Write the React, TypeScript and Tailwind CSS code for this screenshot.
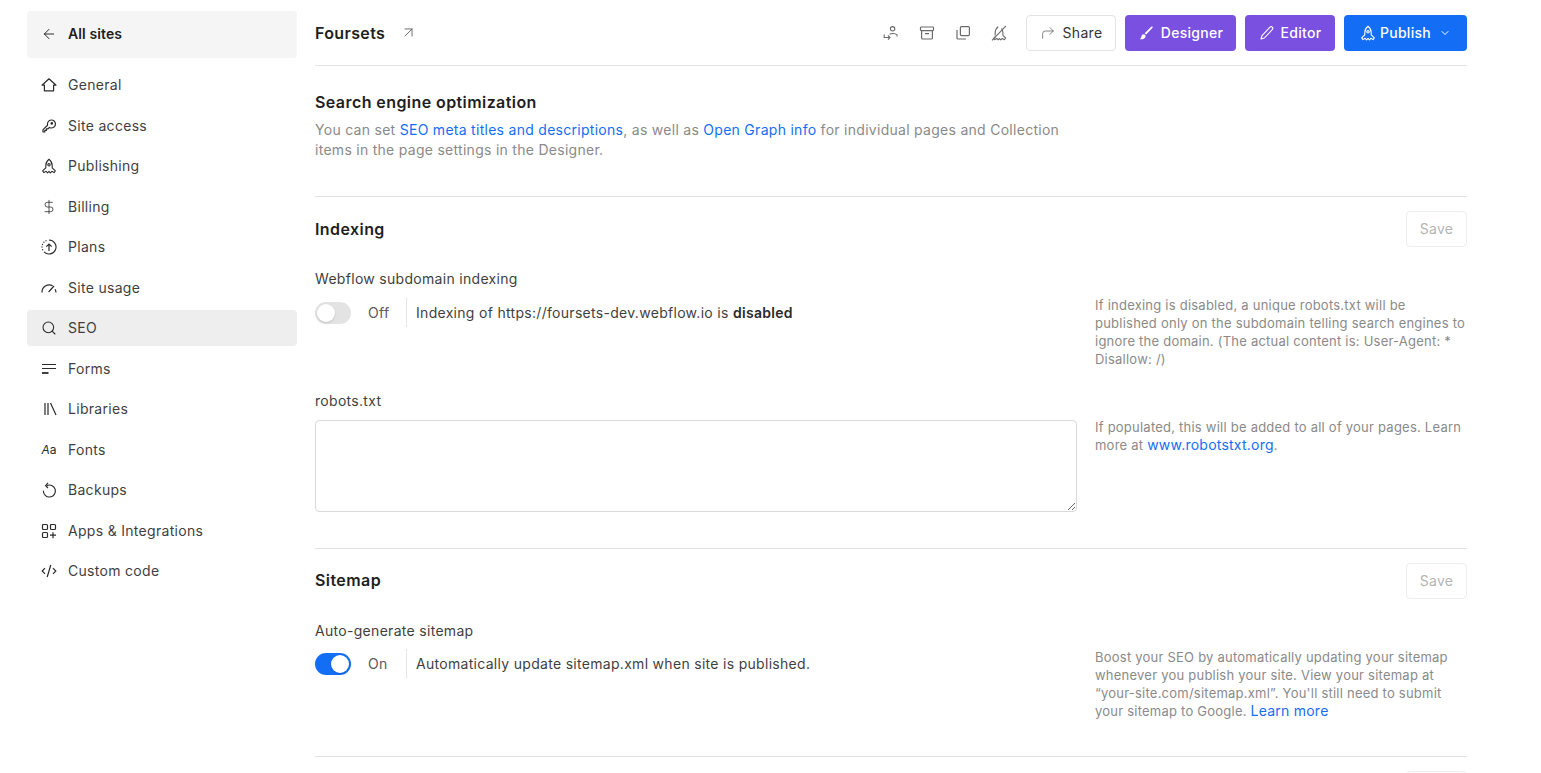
import { ArrowLeft, ArrowUpRight, ChevronDown, CornerUpRight, DollarSign, Search } from "lucide-react";
import type { ReactNode } from "react";

type IconProps = { className?: string };

function Rocket({ className = "" }: IconProps) {
  return (
    <svg viewBox="0 0 16 16" fill="none" stroke="currentColor" strokeWidth="1.1" strokeLinejoin="round" className={className}>
      <path d="M8 1.2C5.6 3 4.8 5.4 4.8 7.6v2.2L1.6 12.8l1.3 1.8 2.2-1.3L6.6 14.8 8 13.4l1.4 1.4 1.5-1.5 2.2 1.3 1.3-1.8-3.2-3V7.6C11.2 5.4 10.4 3 8 1.2Z" />
      <circle cx="8" cy="6.8" r="1.2" />
    </svg>
  );
}

function HomeIcon() {
  return (
    <svg viewBox="0 0 16 16" fill="none" stroke="currentColor" strokeWidth="1.2" strokeLinejoin="round" className="h-4 w-4">
      <path d="M8 1.8 1 8.2h2.4v5.6h9.2V8.2H15L8 1.8Z" />
    </svg>
  );
}

function KeyIcon() {
  return (
    <svg viewBox="0 0 16 16" fill="none" stroke="currentColor" strokeWidth="1.2" strokeLinejoin="round" className="h-4 w-4">
      <path d="M10.2 2a4 4 0 0 1 .5 8 4 4 0 0 1-2.2-.6L7 10.8H5.4v1.6H3.8V14H2v-2.4l4.6-4.4A4 4 0 0 1 10.2 2Z" />
      <circle cx="10.8" cy="5.4" r="0.7" />
    </svg>
  );
}

function PlansIcon() {
  return (
    <svg viewBox="0 0 16 16" fill="none" stroke="currentColor" strokeWidth="1.1" className="h-4 w-4">
      <path d="M8 1a7 7 0 1 1-5 11.9" />
      <path d="M1 8v.1M1.5 5.4v.1M2.9 3.2v.1M5 1.7v.1M1.6 10.7v.1" strokeLinecap="round" strokeWidth="1.3" />
      <path d="M8 12V5M5.3 7.6 8 5l2.7 2.6" strokeWidth="1.2" />
    </svg>
  );
}

function GaugeIcon() {
  return (
    <svg viewBox="0 0 16 16" fill="none" stroke="currentColor" strokeWidth="1.2" className="h-4 w-4">
      <path d="M1 12.5A7.2 7.2 0 0 1 11.6 5.8" />
      <path d="M15 12.5a7 7 0 0 0-.9-3.3" />
      <path d="M7.6 12 13 6" />
    </svg>
  );
}

function FormsIcon() {
  return (
    <svg viewBox="0 0 16 16" fill="none" stroke="currentColor" className="h-4 w-4">
      <path d="M1 3.5h14M1 7.5h14" strokeWidth="1.2" />
      <path d="M1 12h6.5" strokeWidth="1.8" />
    </svg>
  );
}

function LibrariesIcon() {
  return (
    <svg viewBox="0 0 16 16" fill="none" stroke="currentColor" strokeWidth="1.2" className="h-4 w-4">
      <path d="M4 2v12M7 2v12M9.5 2l5.5 12" />
    </svg>
  );
}

function BackupIcon() {
  return (
    <svg viewBox="0 0 16 16" fill="none" stroke="currentColor" strokeWidth="1.2" className="h-4 w-4">
      <path d="M5.8 3.6A6 6 0 1 1 2.4 8.6" />
      <path d="M7 0.8 4.6 3.6 7 6" />
    </svg>
  );
}

function AppsIcon() {
  return (
    <svg viewBox="0 0 16 16" fill="none" stroke="currentColor" strokeWidth="1.2" className="h-4 w-4">
      <rect x="1.5" y="1.5" width="5" height="5" rx="1" />
      <rect x="9.5" y="1.5" width="5" height="5" rx="1" />
      <rect x="1.5" y="9.5" width="5" height="5" rx="1" />
      <path d="M12 9.2v6M9 12.2h6" />
    </svg>
  );
}

function CodeIcon() {
  return (
    <svg viewBox="0 0 16 16" fill="none" stroke="currentColor" strokeWidth="1.2" className="h-4 w-4">
      <path d="M4 5.2 1.2 8 4 10.8M12 5.2 14.8 8 12 10.8M9.8 2 6.2 14" />
    </svg>
  );
}

function TransferIcon() {
  return (
    <svg viewBox="0 0 16 16" fill="none" stroke="currentColor" strokeWidth="1.1" className="h-4 w-4">
      <circle cx="9.6" cy="3.8" r="2.2" />
      <path d="M6.6 9.2c1.6-1 5.4-1.1 7.4.6v1.6" />
      <path d="M1.2 9.6v2.9h5.6M5 10.4l2 2.1-2 2.1" />
    </svg>
  );
}

function ArchiveIcon() {
  return (
    <svg viewBox="0 0 16 16" fill="none" stroke="currentColor" strokeWidth="1.2" className="h-4 w-4">
      <rect x="1.5" y="2" width="13" height="3.6" rx="0.8" />
      <path d="M2.6 5.6V13a1 1 0 0 0 1 1h8.8a1 1 0 0 0 1-1V5.6M6 8.6h4" />
    </svg>
  );
}

function CopyIcon() {
  return (
    <svg viewBox="0 0 16 16" fill="none" stroke="currentColor" strokeWidth="1.2" className="h-4 w-4">
      <rect x="5.4" y="1.6" width="9" height="9" rx="1" />
      <path d="M2 5v8a1 1 0 0 0 1 1h8" />
    </svg>
  );
}

function RocketOffIcon() {
  return (
    <svg viewBox="0 0 16 16" fill="none" stroke="currentColor" strokeWidth="1.1" strokeLinejoin="round" className="h-4 w-4">
      <path d="M4.2 10.6V7.8c0-2.4 1-4.6 3-6M10.6 3.4c.9 1.3 1.3 2.8 1.3 4.4v2.6l2.8 2.6-1.3 1.8-2.1-1.3-1.5 1.4-1.3-1.4-1.4 1.4-1.4-1.4-2.2 1.3-.9-1.3 2-2" />
      <path d="M15 .8 1 15.4" />
    </svg>
  );
}

function BrushIcon() {
  return (
    <svg viewBox="0 0 16 16" className="h-4 w-4" fill="currentColor">
      <path d="M14.4 1.6c.4.3.4.7.1 1.1L8.2 9.6 6.6 8.2 13.3 1.7c.3-.3.7-.4 1.1-.1Z" />
      <path d="M5.6 9.2c1.2 0 2 .9 2 2 0 2-2.2 3.3-5.8 3.1.9-.7 1.3-1.4 1.5-2.6.2-1.4 1-2.5 2.3-2.5Z" />
    </svg>
  );
}

function PencilIcon() {
  return (
    <svg viewBox="0 0 16 16" fill="none" stroke="currentColor" strokeWidth="1.1" strokeLinejoin="round" className="h-4 w-4">
      <path d="M11 2.2a1.6 1.6 0 0 1 2.3 2.3L5.4 13 2 14l1-3.4 8-8.4Z" />
    </svg>
  );
}

const navItems: { label: string; icon: ReactNode; active?: boolean }[] = [
  { label: "General", icon: <HomeIcon /> },
  { label: "Site access", icon: <KeyIcon /> },
  { label: "Publishing", icon: <Rocket className="h-4 w-4" /> },
  { label: "Billing", icon: <DollarSign className="h-[18px] w-[18px]" strokeWidth={1.2} /> },
  { label: "Plans", icon: <PlansIcon /> },
  { label: "Site usage", icon: <GaugeIcon /> },
  { label: "SEO", icon: <Search className="h-4 w-4" strokeWidth={1.6} />, active: true },
  { label: "Forms", icon: <FormsIcon /> },
  { label: "Libraries", icon: <LibrariesIcon /> },
  { label: "Fonts", icon: <span className="text-[12px] leading-4 tracking-normal"><i>A</i>a</span> },
  { label: "Backups", icon: <BackupIcon /> },
  { label: "Apps & Integrations", icon: <AppsIcon /> },
  { label: "Custom code", icon: <CodeIcon /> },
];

function Sidebar() {
  return (
    <aside className="flex w-[270px] shrink-0 flex-col pt-[11px]">
      <div className="mb-[9px] flex h-[47px] items-center gap-[11px] rounded-[4px] bg-[#f5f5f5] px-[14px] pb-[2px] font-semibold tracking-[0.1px] text-[#1e1e1e]">
        <ArrowLeft className="h-4 w-4" strokeWidth={1.4} />
        All sites
      </div>
      <nav className="flex flex-col gap-[4.5px]">
        {navItems.map((item) => (
          <div
            key={item.label}
            className={`flex h-9 items-center gap-[11px] rounded-[4px] px-[14px] text-[#3f3f3f] ${item.active ? "bg-[#eeeeee]" : ""}`}
          >
            <span className="flex w-4 justify-center text-[#2b2b2b]">{item.icon}</span>
            {item.label}
          </div>
        ))}
      </nav>
    </aside>
  );
}

function Toggle({ on }: { on: boolean }) {
  return (
    <div className={`flex h-[22px] w-9 items-center rounded-full p-[2px] ${on ? "justify-end bg-[#146ef5]" : "justify-start bg-[#e3e3e3]"}`}>
      <div className="h-[18px] w-[18px] rounded-full bg-white shadow-sm" />
    </div>
  );
}

function SaveButton() {
  return (
    <button className="h-9 w-[61px] rounded-[4px] border border-[#eeeeee] text-[#b5b5b5]">Save</button>
  );
}

function Help({ children, className = "" }: { children: ReactNode; className?: string }) {
  return <p className={`w-[372px] text-[13px] leading-[18px] tracking-[0.23px] text-[#8a8a8a] ${className}`}>{children}</p>;
}

function ToggleRow({ on, children }: { on: boolean; children: ReactNode }) {
  return (
    <div className="flex w-[762px] items-center">
      <Toggle on={on} />
      <span className="ml-[17px] w-[38px] text-[#5a5a5a]">{on ? "On" : "Off"}</span>
      <div className="flex h-[29px] items-center border-l border-[#e6e6e6] pl-[9px] text-[#3f3f3f]">{children}</div>
    </div>
  );
}

function Header() {
  return (
    <header className="flex h-[66px] items-center justify-between border-b border-[#e2e2e2]">
      <div className="flex items-center gap-[15px]">
        <h1 className="text-[16px] font-semibold tracking-[0.35px] text-[#1e1e1e]">Foursets</h1>
        <ArrowUpRight className="h-[17px] w-[17px] text-[#555]" strokeWidth={1.2} />
      </div>
      <div className="flex items-center text-[#6b6b6b]">
        <div className="mr-[19px] flex items-center gap-[20px]">
          <TransferIcon />
          <ArchiveIcon />
          <CopyIcon />
          <RocketOffIcon />
        </div>
        <button className="mr-[9px] flex h-9 w-[90px] items-center justify-center gap-[7px] rounded-[4px] border border-[#e3e3e3] text-[#333]">
          <CornerUpRight className="h-4 w-4 text-[#666]" strokeWidth={1.2} />
          Share
        </button>
        <button className="mr-[9px] flex h-9 w-[111px] items-center justify-center gap-[7px] rounded-[4px] bg-[#7a50e0] font-medium text-white">
          <BrushIcon />
          Designer
        </button>
        <button className="mr-[9px] flex h-9 w-[90px] items-center justify-center gap-[6px] rounded-[4px] bg-[#7a50e0] font-medium text-white">
          <PencilIcon />
          Editor
        </button>
        <button className="flex h-9 w-[123px] items-center justify-center gap-[4px] rounded-[4px] bg-[#146ef5] font-medium text-white">
          <Rocket className="h-4 w-4" />
          Publish
          <ChevronDown className="ml-[4px] h-3 w-3" strokeWidth={2} />
        </button>
      </div>
    </header>
  );
}

export default function App() {
  return (
    <div className="flex h-[773px] gap-[18px] overflow-hidden bg-white pl-[27px] text-[14px] leading-5 tracking-[0.3px] [font-family:Inter,'Liberation_Sans',sans-serif]">
      <Sidebar />
      <main className="w-[1152px] shrink-0">
        <Header />

        <section className="h-[131px] border-b border-[#e2e2e2] pt-[25px]">
          <h2 className="text-[16px] font-semibold leading-[22px] tracking-[0.42px] text-[#1e1e1e]">Search engine optimization</h2>
          <p className="mt-[7px] w-[760px] leading-[20px] tracking-[0.28px] text-[#8a8a8a]">
            You can set <span className="text-[#146ef5]">SEO meta titles and descriptions</span>, as well as{" "}
            <span className="text-[#146ef5]">Open Graph info</span> for individual pages and Collection items in the page settings in the Designer.
          </p>
        </section>

        <section className="h-[352px] border-b border-[#e2e2e2] pt-[14px]">
          <div className="flex items-center justify-between">
            <h2 className="text-[16px] font-semibold tracking-[0.42px] text-[#1e1e1e]">Indexing</h2>
            <SaveButton />
          </div>
          <div className="mt-[22px] text-[#3f3f3f]">Webflow subdomain indexing</div>
          <div className="mt-[9px] flex items-start justify-between">
            <ToggleRow on={false}>
              <span>Indexing of https://foursets-dev.webflow.io is <b className="font-semibold text-[#2b2b2b]">disabled</b></span>
            </ToggleRow>
            <Help className="mt-[-2px]">If indexing is disabled, a unique robots.txt will be published only on the subdomain telling search engines to ignore the domain. (The actual content is: User-Agent: * Disallow: /)</Help>
          </div>
          <div className="mt-[23px] text-[#3f3f3f]">robots.txt</div>
          <div className="mt-[9px] flex items-start justify-between">
            <textarea className="h-[92px] w-[762px] rounded-[4px] border border-[#d9d9d9] bg-white" />
            <Help className="mt-[-2px]">
              If populated, this will be added to all of your pages. Learn more at <span className="text-[14px] text-[#146ef5]">www.robotstxt.org</span>.
            </Help>
          </div>
        </section>

        <section className="h-[208px] border-b border-[#e2e2e2] pt-[14px]">
          <div className="flex items-center justify-between">
            <h2 className="pb-[2px] text-[16px] font-semibold tracking-[0.42px] text-[#1e1e1e]">Sitemap</h2>
            <SaveButton />
          </div>
          <div className="mt-[22px] text-[#3f3f3f]">Auto-generate sitemap</div>
          <div className="mt-[8px] flex items-start justify-between">
            <ToggleRow on>
              <span>Automatically update sitemap.xml when site is published.</span>
            </ToggleRow>
            <Help className="mt-[-1px]">
              Boost your SEO by automatically updating your sitemap whenever you publish your site. View your sitemap at “your-site.com/sitemap.xml”. You'll still need to submit your sitemap to Google. <span className="text-[14px] text-[#146ef5]">Learn more</span>
            </Help>
          </div>
        </section>

        <div className="mt-[14px] flex justify-end">
          <SaveButton />
        </div>
      </main>
    </div>
  );
}
